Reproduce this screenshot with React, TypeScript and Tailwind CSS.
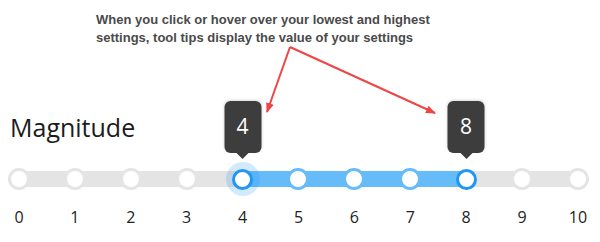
import React from 'react'

const TICKS = [0, 1, 2, 3, 4, 5, 6, 7, 8, 9, 10]
const LOW = 4
const HIGH = 8

function Tooltip({ value }: { value: number }) {
  return (
    <div className="absolute left-1/2 bottom-[31px] -translate-x-1/2 flex flex-col items-center">
      <div className="w-[37px] h-[52px] rounded-[6px] bg-[#3d3d3d] shadow-[0_-1px_3px_rgba(0,0,0,0.15)] flex items-center justify-center text-white text-[21px] font-['Open_Sans',sans-serif]">
        {value}
      </div>
      <div className="w-0 h-0 border-x-[6px] border-x-transparent border-t-[6px] border-t-[#3d3d3d]" />
    </div>
  )
}

function Dot({ n }: { n: number }) {
  const thumb = n === LOW || n === HIGH
  const inRange = n > LOW && n < HIGH
  if (thumb) {
    return (
      <div className="relative w-[22px] h-[22px] flex items-center justify-center">
        {n === LOW && (
          <div className="absolute left-1/2 top-1/2 -translate-x-1/2 -translate-y-1/2 w-[34px] h-[34px] rounded-full bg-[#2196f3]/20" />
        )}
        <div className="relative w-[21px] h-[21px] rounded-full bg-white border-[3px] border-[#2196f3]" />
        <Tooltip value={n} />
      </div>
    )
  }
  return (
    <div
      className={`relative w-[22px] h-[22px] rounded-full bg-white border-[3px] ${
        inRange ? 'border-[#66bbf9]' : 'border-[#e4e4e4]'
      }`}
    />
  )
}

export default function App() {
  const step = 100 / 10
  return (
    <div className="w-[600px] h-[242px] bg-white relative overflow-hidden">
      <p className="pl-[96px] pt-[11px] text-[13px] leading-[18px] font-bold text-[#4a4a4a] font-['Liberation_Sans',Arial,sans-serif]">
        When you click or hover over your lowest and highest
        <br />
        settings, tool tips display the value of your settings
      </p>

      <svg className="absolute left-0 top-0" width="600" height="242" viewBox="0 0 600 242">
        <defs>
          <marker id="head" markerWidth="10" markerHeight="10" refX="9" refY="5" orient="auto" markerUnits="userSpaceOnUse">
            <path d="M0,1 L10,5 L0,9 Z" fill="#f04545" />
          </marker>
        </defs>
        <path d="M290,47 L267,112" stroke="#f04545" strokeWidth="2" fill="none" markerEnd="url(#head)" />
        <path d="M290,47 L435,113" stroke="#f04545" strokeWidth="2" fill="none" markerEnd="url(#head)" />
      </svg>

      <h2 className="pl-[10px] mt-[64px] text-[25px] leading-[32px] text-[#1c1c1c] font-['Open_Sans',sans-serif]">
        Magnitude
      </h2>

      <div className="ml-[8px] w-[581px] mt-[25px]">
        <div className="relative">
          <div className="absolute left-[11px] right-[11px] top-[3px] h-[16px] bg-[#e4e4e4]">
            <div
              className="absolute top-0 h-full bg-[#66bbf9]"
              style={{ left: `${LOW * step}%`, width: `${(HIGH - LOW) * step}%` }}
            />
          </div>
          <div className="relative flex justify-between">
            {TICKS.map(n => (
              <Dot key={n} n={n} />
            ))}
          </div>
        </div>
        <div className="flex justify-between mt-[17px]">
          {TICKS.map(n => (
            <span
              key={n}
              className="w-[22px] text-center text-[16px] leading-[20px] text-[#222] font-['Open_Sans',sans-serif]"
            >
              {n}
            </span>
          ))}
        </div>
      </div>
    </div>
  )
}
